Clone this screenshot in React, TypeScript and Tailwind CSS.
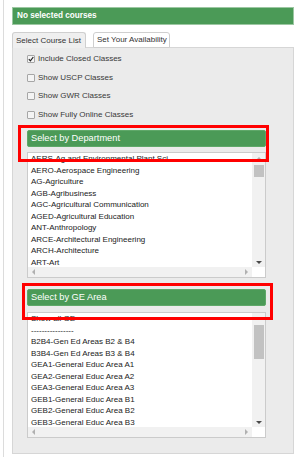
import type { ReactNode } from 'react';

const departments = [
  'AERS-Ag and Environmental Plant Sci',
  'AERO-Aerospace Engineering',
  'AG-Agriculture',
  'AGB-Agribusiness',
  'AGC-Agricultural Communication',
  'AGED-Agricultural Education',
  'ANT-Anthropology',
  'ARCE-Architectural Engineering',
  'ARCH-Architecture',
  'ART-Art',
];

const geAreas = [
  'Show all GE',
  '----------------',
  'B2B4-Gen Ed Areas B2 & B4',
  'B3B4-Gen Ed Areas B3 & B4',
  'GEA1-General Educ Area A1',
  'GEA2-General Educ Area A2',
  'GEA3-General Educ Area A3',
  'GEB1-General Educ Area B1',
  'GEB2-General Educ Area B2',
  'GEB3-General Educ Area B3',
];

const filters = [
  { label: 'Include Closed Classes', checked: true },
  { label: 'Show USCP Classes', checked: false },
  { label: 'Show GWR Classes', checked: false },
  { label: 'Show Fully Online Classes', checked: false },
];

function Checkbox({ checked }: { checked: boolean }) {
  return (
    <span className="flex h-[8px] w-[8px] items-center justify-center rounded-[1px] border border-[#a6a6a6] bg-[#f4f4f4]">
      {checked && (
        <svg width="6" height="6" viewBox="0 0 6 6" fill="none">
          <path d="M0.8 3.2 L2.4 4.8 L5.3 1" stroke="#222" strokeWidth="1.2" />
        </svg>
      )}
    </span>
  );
}

function SectionHeader({ children }: { children: ReactNode }) {
  return (
    <div className="flex h-[17px] w-[239px] items-center rounded-[2px] border border-[#5fa869] bg-[#4b9a57] pl-[3px] text-[9.25px] text-white">
      {children}
    </div>
  );
}

function ListBox({ items, thumb }: { items: string[]; thumb: number }) {
  return (
    <div className="flex h-[126px] w-[239px] flex-col border border-[#cbcbcb] bg-white">
      <div className="flex flex-1 overflow-hidden">
        <div className="flex-1 overflow-hidden">
          {items.map((item) => (
            <div
              key={item}
              className="h-[11.5px] whitespace-nowrap pl-[3px] text-[8px] leading-[11.5px] text-[#222]"
            >
              {item}
            </div>
          ))}
        </div>
        <div className="flex w-[13px] flex-col bg-[#f1f1f1]">
          <div className="flex h-[10px] items-center justify-center">
            <span className="h-0 w-0 border-b-[3px] border-l-[3px] border-r-[3px] border-b-[#b0b0b0] border-l-transparent border-r-transparent" />
          </div>
          <div className="flex-1">
            <div className="ml-[2px] mt-[2px] w-[10px] bg-[#c2c2c2]" style={{ height: thumb }} />
          </div>
          <div className="flex h-[10px] items-center justify-center">
            <span className="h-0 w-0 border-l-[3px] border-r-[3px] border-t-[3px] border-l-transparent border-r-transparent border-t-[#4a4a4a]" />
          </div>
        </div>
      </div>
      <div className="flex h-[10px]">
        <div className="flex flex-1 items-center justify-between bg-[#f1f1f1] px-[4px]">
          <span className="h-0 w-0 border-b-[3px] border-r-[3px] border-t-[3px] border-b-transparent border-t-transparent border-r-[#b0b0b0]" />
          <span className="h-0 w-0 border-b-[3px] border-l-[3px] border-t-[3px] border-b-transparent border-t-transparent border-l-[#b0b0b0]" />
        </div>
        <div className="w-[13px] bg-white" />
      </div>
    </div>
  );
}

export default function App() {
  return (
    <div className="relative h-[457px] w-[300px] overflow-hidden bg-white font-['Liberation_Sans',Arial,sans-serif]">
      <div className="ml-[3px] h-full border-l border-[#dcdcdc] pl-[8px] pt-[7px]">
        <div className="w-[282px]">
          {/* status bar */}
          <div className="flex h-[18px] items-center border border-[#9cc7a2] bg-[#4b9a57] pl-[4px] text-[8.2px] font-bold text-white">
            No selected courses
          </div>

          {/* tabs */}
          <div className="relative z-10 mt-[7px] -mb-px flex h-[16px] gap-[7px]">
            <div className="flex w-[74px] items-center rounded-t-[3px] border border-b-0 border-[#cfcfcf] bg-[#efefef] pl-[3px] text-[8px] text-[#333]">
              Select Course List
            </div>
            <div className="flex w-[77px] items-center rounded-t-[3px] border border-[#cfcfcf] bg-white pl-[3px] text-[8px] text-[#333]">
              Set Your Availability
            </div>
          </div>

          {/* panel */}
          <div className="h-[407px] border border-[#d6d6d6] bg-[#ebebeb] pl-[14px] pt-[2px]">
            {filters.map((f) => (
              <div key={f.label} className="flex h-[18.5px] items-center gap-[3px] text-[8px] text-[#383838]">
                <Checkbox checked={f.checked} />
                <span>{f.label}</span>
              </div>
            ))}

            <div className="mt-[6px]">
              <SectionHeader>Select by Department</SectionHeader>
            </div>
            <div className="mt-[5px]">
              <ListBox items={departments} thumb={12} />
            </div>

            <div className="mt-[11px]">
              <SectionHeader>Select by GE Area</SectionHeader>
            </div>
            <div className="mt-[6px]">
              <ListBox items={geAreas} thumb={34} />
            </div>
          </div>
        </div>
      </div>

      {/* annotation boxes */}
      <div className="absolute left-[18px] top-[125px] h-[37px] w-[251px] border-[3px] border-[#ff0000]" />
      <div className="absolute left-[22px] top-[283px] h-[37px] w-[251px] border-[3px] border-[#ff0000]" />
    </div>
  );
}
